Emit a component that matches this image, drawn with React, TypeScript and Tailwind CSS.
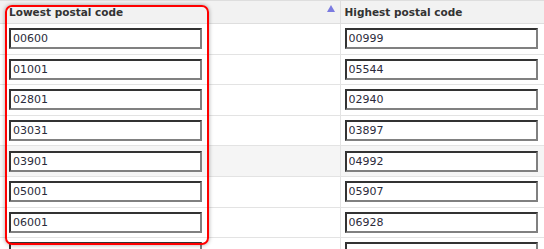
import React from "react";

const rows: [string, string][] = [
  ["00600", "00999"],
  ["01001", "05544"],
  ["02801", "02940"],
  ["03031", "03897"],
  ["03901", "04992"],
  ["05001", "05907"],
  ["06001", "06928"],
  ["", ""],
];

function CodeInput({ value }: { value: string }) {
  return (
    <input
      readOnly
      value={value}
      className="block h-[21px] w-[193px] border-2 border-t-[#333] border-l-[#333] border-r-[#808080] border-b-[#808080] bg-white pl-[2px] text-[11px] text-[#2b2b3b] outline-none"
      style={{ fontFamily: '"DejaVu Sans", Verdana, sans-serif' }}
    />
  );
}

export default function App() {
  return (
    <div
      className="relative h-[249px] w-[544px] overflow-hidden bg-white"
      style={{ fontFamily: '"DejaVu Sans", Verdana, sans-serif' }}
    >
      <table className="w-[560px] border-collapse">
        <thead>
          <tr className="h-[23px] border-b border-t border-[#dedede] bg-[#f2f2f2] text-left text-[10.5px] font-bold text-[#333]">
            <th className="relative w-[340px] border-r border-[#dedede] pl-[9px] pt-[1px] align-middle">
              Lowest postal code
              <span className="absolute right-[5px] top-[4px] h-0 w-0 border-x-[4px] border-b-[7px] border-x-transparent border-b-[#7b7be0]" />
            </th>
            <th className="pl-[4px] pt-[1px] align-middle">Highest postal code</th>
          </tr>
        </thead>
        <tbody>
          {rows.map(([lo, hi], i) => (
            <tr
              key={i}
              className={`h-[30.6px] border-b border-[#e3e3e3] ${i === 4 ? "bg-[#f5f5f5]" : "bg-white"}`}
            >
              <td className="border-r border-[#e3e3e3] pl-[9px] align-middle">
                <CodeInput value={lo} />
              </td>
              <td className="pl-[4px] align-middle">
                <CodeInput value={hi} />
              </td>
            </tr>
          ))}
        </tbody>
      </table>
      <div className="pointer-events-none absolute left-[5px] top-[5px] h-[240px] w-[204px] rounded-[7px] border-2 border-[#ff0000] shadow-[0_0_4px_rgba(0,0,0,0.35)]" />
    </div>
  );
}
